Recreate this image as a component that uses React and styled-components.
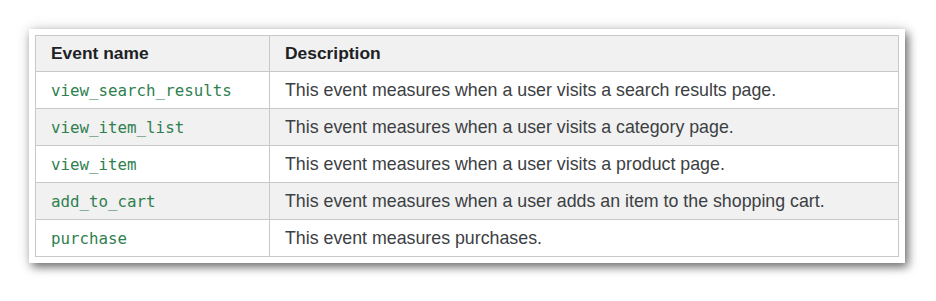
import React from 'react';
import styled, { createGlobalStyle } from 'styled-components';

const GlobalStyle = createGlobalStyle`
  html, body {
    margin: 0;
    background: #ffffff;
  }
`;

const Page = styled.div`
  box-sizing: border-box;
  min-height: 100vh;
  padding: 29px 0 0 29px;
`;

const Card = styled.div`
  width: 864px;
  padding: 6px;
  background: #ffffff;
  box-shadow: 3px 4px 9px rgba(0, 0, 0, 0.55), 0 0 14px rgba(0, 0, 0, 0.12);
`;

const Table = styled.table`
  width: 864px;
  border-collapse: collapse;
  table-layout: fixed;
  font-family: 'Liberation Sans', Arial, sans-serif;
`;

const HeadCell = styled.th`
  box-sizing: border-box;
  height: 36px;
  padding: 0 15px;
  text-align: left;
  font-size: 17.4px;
  font-weight: 700;
  color: #202124;
  background: #f1f1f1;
  border: 1px solid #c9c9c9;
  width: ${(p) => p.$w || 'auto'};
`;

const Row = styled.tr`
  background: ${(p) => (p.$alt ? '#f1f1f1' : '#ffffff')};
`;

const Cell = styled.td`
  height: 36px;
  padding: 0 15px;
  border: 1px solid #c9c9c9;
  font-size: 17.8px;
  color: #3c4043;
`;

const Code = styled.code`
  font-family: 'DejaVu Sans Mono', 'Liberation Mono', monospace;
  font-size: 15.8px;
  color: #2f7f4f;
`;

const events = [
  ['view_search_results', 'This event measures when a user visits a search results page.'],
  ['view_item_list', 'This event measures when a user visits a category page.'],
  ['view_item', 'This event measures when a user visits a product page.'],
  ['add_to_cart', 'This event measures when a user adds an item to the shopping cart.'],
  ['purchase', 'This event measures purchases.'],
];

const App = () => {
  return (
    <Page>
      <GlobalStyle />
      <Card>
        <Table>
          <thead>
            <tr>
              <HeadCell $w="234px">Event name</HeadCell>
              <HeadCell>Description</HeadCell>
            </tr>
          </thead>
          <tbody>
            {events.map(([name, desc], i) => (
              <Row key={name} $alt={i % 2 === 1}>
                <Cell>
                  <Code>{name}</Code>
                </Cell>
                <Cell>{desc}</Cell>
              </Row>
            ))}
          </tbody>
        </Table>
      </Card>
    </Page>
  );
};

export default App;
